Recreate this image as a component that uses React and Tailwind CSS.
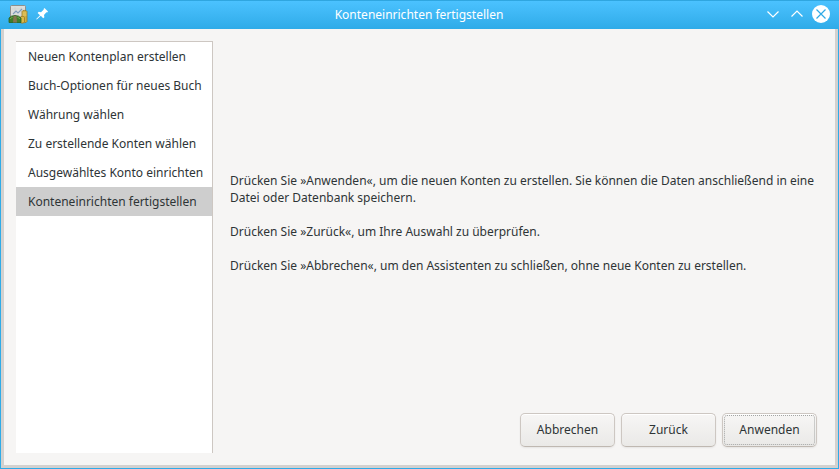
import clsx from 'clsx';

const STEPS = [
  'Neuen Kontenplan erstellen',
  'Buch-Optionen für neues Buch',
  'Währung wählen',
  'Zu erstellende Konten wählen',
  'Ausgewähltes Konto einrichten',
  'Konteneinrichten fertigstellen',
];

function AppIcon() {
  return (
    <svg className="w-5 h-5" viewBox="0 0 20 20" aria-hidden="true">
      <rect x="2.500" y="1.500" width="15" height="15" rx="1" fill="#dcdedc" stroke="#8d908d" />
      <path d="M4 5h12M4 12h12M7 3v11M13 3v11" stroke="#cdd0ce" strokeWidth="0.6" />
      <path d="M5 10l3-3 2 2 4-4" fill="none" stroke="#7f9cba" strokeWidth="1.100" />
      {/* coins */}
      <path d="M14 7.500c0-1.500 5-1.500 5 0v10c0 1.500-5 1.500-5 0z" fill="#cfae3f" stroke="#96792a" strokeWidth="0.8" />
      <path d="M12 13.500c0-1.500 4.500-1.500 4.500 0v4.500c0 1.500-4.500 1.500-4.500 0z" fill="#d9b94a" stroke="#96792a" strokeWidth="0.8" />
      <path d="M14.500 9h4M14.500 11h4" stroke="#ecd47c" strokeWidth="0.8" />
      {/* banknotes */}
      <path d="M1 14q2-2.500 6-2.500t6 2.500v4.500H1z" fill="#3f7d2b" stroke="#2b5f1c" strokeWidth="0.8" />
      <path d="M5.500 12h3l.5 6.500H5z" fill="#86754f" />
      <path d="M2 15q1-1.500 2.500-1.500M9.500 13.500q1.500 0 2.500 1.500" fill="none" stroke="#6db04c" />
    </svg>
  );
}

function PinIcon() {
  return (
    <svg className="w-3 h-3" viewBox="0 0 12 12" aria-hidden="true">
      <path
        d="M8.500 0L12 3.500l-.8 1-.8-.2L8 7l.4 2.200-1.200 1-2.400-2.400L.8 11.600l-.6-.5L4 7.200 1.600 4.900l1.200-1.100L5 4.200 7.800 1.600l-.2-.7z"
        fill="#fff"
      />
    </svg>
  );
}

function TitleBar({ title }) {
  return (
    <header className="grid grid-cols-[1fr_auto_1fr] items-center h-[29px] pl-2 pr-[9px] border-t border-[#2fa6e0] bg-linear-to-b from-[#4bc2ff] to-[#2eabe8] text-white">
      <div className="flex items-center gap-2 pb-0.5">
        <AppIcon />
        <button type="button" aria-label="Auf allen Arbeitsflächen">
          <PinIcon />
        </button>
      </div>
      <h1 className="text-[12px] leading-4">{title}</h1>
      <div className="flex items-center justify-end gap-1.5 pb-0.5">
        <button type="button" aria-label="Minimieren">
          <svg className="w-[18px] h-[18px]" viewBox="0 0 18 18" fill="none" stroke="currentColor" strokeWidth="1.200">
            <path d="M3.500 6.500L9 12l5.500-5.500" />
          </svg>
        </button>
        <button type="button" aria-label="Maximieren">
          <svg className="w-[18px] h-[18px]" viewBox="0 0 18 18" fill="none" stroke="currentColor" strokeWidth="1.200">
            <path d="M3.500 11.500L9 6l5.500 5.500" />
          </svg>
        </button>
        <button type="button" aria-label="Schließen">
          <svg className="w-[18px] h-[18px]" viewBox="0 0 18 18" fill="none">
            <circle cx="9" cy="9" r="9" fill="#fff" />
            <path d="M4.500 4.500l9 9M13.500 4.500l-9 9" stroke="#2fa9e5" strokeWidth="1.200" />
          </svg>
        </button>
      </div>
    </header>
  );
}

function StepList({ steps, current }) {
  return (
    <ol className="w-[197px] shrink-0 bg-white border-t border-r border-[#cdc7c2]">
      {steps.map((step, i) => (
        <li
          key={step}
          aria-current={i === current ? 'step' : undefined}
          className={clsx('h-[29px] px-3 leading-[29px] whitespace-nowrap', i === current && 'bg-[#cecece]')}
        >
          {step}
        </li>
      ))}
    </ol>
  );
}

function DialogButton({ children, focused = false }) {
  return (
    <button
      type="button"
      className="w-[95px] h-[34px] p-px rounded-[5px] border border-[#cdc7c2] border-b-[#bfb8b1] bg-linear-to-b from-[#f7f6f5] to-[#eae9e7] shadow-[0_1px_2px_rgba(0,0,0,0.07),inset_0_1px_#fff]"
    >
      <span
        className={clsx(
          'flex items-center justify-center h-full rounded-[3px] border border-dotted',
          focused ? 'border-[#a3a5a4]' : 'border-transparent'
        )}
      >
        {children}
      </span>
    </button>
  );
}

export default function App() {
  return (
    <div className="flex flex-col min-h-screen font-['Noto_Sans',sans-serif] text-[12px] text-[#2e3436]">
      <TitleBar title="Konteneinrichten fertigstellen" />

      {/* Window frame */}
      <div className="flex flex-1 border-x border-b border-[#2eabe8]">
        <div className="flex flex-1 gap-[17px] p-3 border-x-3 border-b-3 border-[#d3d1cf] bg-[#f6f5f4]">
          <StepList steps={STEPS} current={5} />

          <main className="flex flex-col flex-1 gap-2 pr-1.5 pb-1.5">
            <div className="flex flex-col flex-1 justify-center gap-[17px] leading-[17px]">
              <p>
                Drücken Sie »Anwenden«, um die neuen Konten zu erstellen. Sie können die Daten anschließend in eine
                Datei oder Datenbank speichern.
              </p>
              <p>Drücken Sie »Zurück«, um Ihre Auswahl zu überprüfen.</p>
              <p>Drücken Sie »Abbrechen«, um den Assistenten zu schließen, ohne neue Konten zu erstellen.</p>
            </div>

            <div className="flex justify-end gap-1.5">
              <DialogButton>Abbrechen</DialogButton>
              <DialogButton>Zurück</DialogButton>
              <DialogButton focused>Anwenden</DialogButton>
            </div>
          </main>
        </div>
      </div>
    </div>
  );
}
